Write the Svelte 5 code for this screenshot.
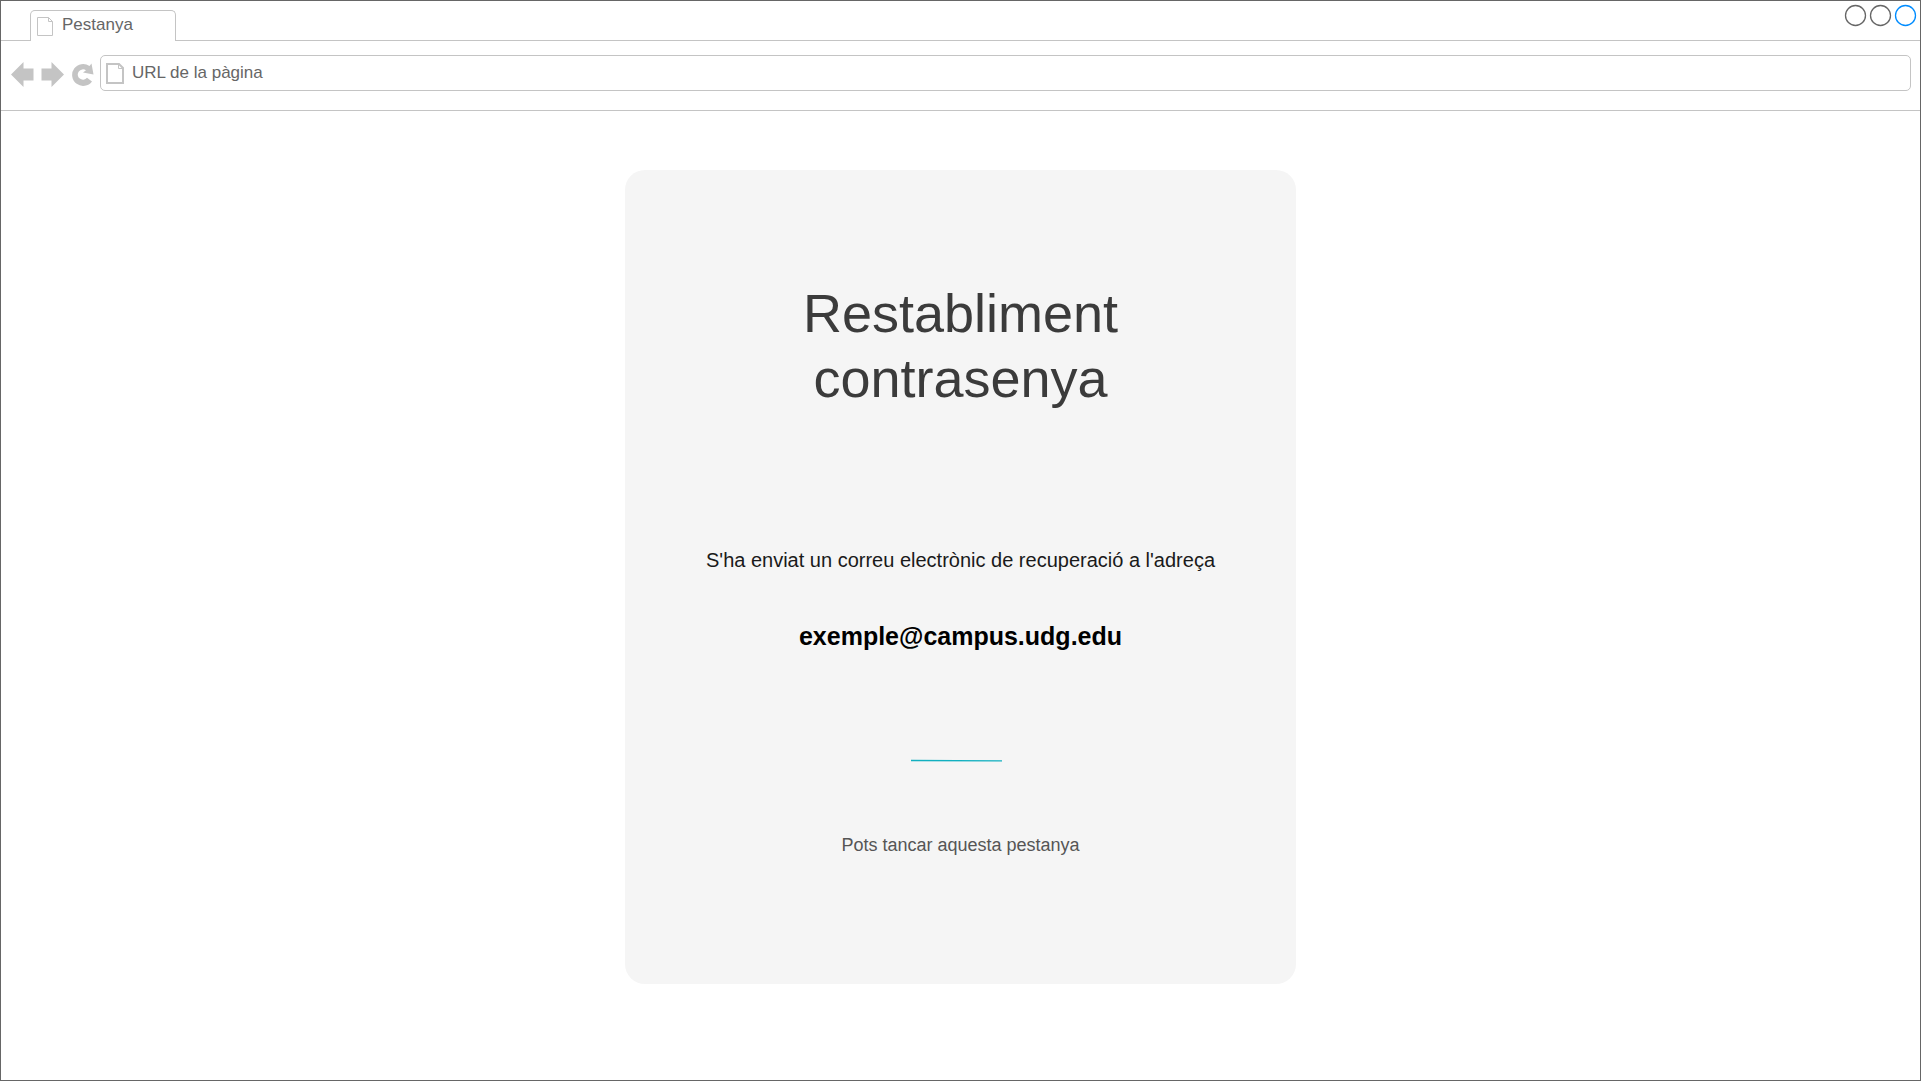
<script>
  let url = $state('URL de la pàgina');
  const email = 'exemple@campus.udg.edu';
</script>

<div class="window">
  <header>
    <div class="strip">
      <button class="tab" type="button">
        <svg width="16" height="19" viewBox="0 0 16 19" aria-hidden="true">
          <path d="M.5 .5H11.500L15.500 4.500V18.500H.5ZM11.500 .5V4.500H15.500" />
        </svg>
        <span>Pestanya</span>
      </button>
      <div class="controls">
        <button class="dot" type="button" aria-label="Minimitza">
          <svg width="21" height="21" viewBox="0 0 21 21"><circle cx="10.500" cy="10.500" r="10" /></svg>
        </button>
        <button class="dot" type="button" aria-label="Maximitza">
          <svg width="21" height="21" viewBox="0 0 21 21"><circle cx="10.500" cy="10.500" r="10" /></svg>
        </button>
        <button class="dot active" type="button" aria-label="Tanca">
          <svg width="21" height="21" viewBox="0 0 21 21"><circle cx="10.500" cy="10.500" r="10" /></svg>
        </button>
      </div>
    </div>
    <div class="toolbar">
      <nav>
        <button class="nav" type="button" aria-label="Enrere">
          <svg width="23" height="26" viewBox="0 0 23 26"><path d="M0 12.500L12.500 0V6.500H22.500V18.500H12.500V25Z" /></svg>
        </button>
        <button class="nav" type="button" aria-label="Endavant">
          <svg width="23" height="26" viewBox="0 0 23 26"><path d="M23 12.500L10.500 0V6.500H.5V18.500H10.500V25Z" /></svg>
        </button>
        <button class="nav" type="button" aria-label="Actualitza">
          <svg width="23" height="26" viewBox="0 0 23 26">
            <path d="M20.500 1.500L22.500 12.500L12 10.500L15 8.300A5.200 5.200 0 1 0 16 15.800L21 19.500A11 11 0 1 1 18.500 4Z" />
          </svg>
        </button>
      </nav>
      <label class="address">
        <svg width="18" height="21" viewBox="0 0 18 21" aria-hidden="true">
          <path d="M1 1H13L17 5V20H1Z" /><path class="fold" d="M12.500 1V5.500H17" />
        </svg>
        <input type="text" aria-label="URL" bind:value={url} />
      </label>
    </div>
  </header>

  <main>
    <section class="card">
      <h1>Restabliment<br />contrasenya</h1>
      <p class="message">S'ha enviat un correu electrònic de recuperació a l'adreça</p>
      <p class="email">{email}</p>
      <svg class="rule" width="91" height="3" viewBox="0 0 91 3" aria-hidden="true">
        <path d="M0 1.500L91 1.900" />
      </svg>
      <p class="hint">Pots tancar aquesta pestanya</p>
    </section>
  </main>
</div>

<style>
  :global(body) {
    margin: 0;
    background: #fff;
  }

  .window {
    box-sizing: border-box;
    min-height: calc(100vh - 1px);
    margin: 0 1px 1px 0;
    border: 1px solid #666;
    background: #fff;
    font-family: 'Liberation Sans', Arial, sans-serif;
  }

  button,
  input {
    margin: 0;
    padding: 0;
    border: 0;
    background: none;
    font: inherit;
    color: inherit;
  }

  .strip {
    display: flex;
    justify-content: space-between;
    align-items: flex-end;
    box-sizing: border-box;
    height: 40px;
    padding: 0 4px 0 29px;
    border-bottom: 1px solid #c4c4c4;
  }

  .tab {
    display: flex;
    align-items: center;
    gap: 9px;
    box-sizing: border-box;
    width: 146px;
    height: 31px;
    margin-bottom: -1px;
    padding: 0 6px;
    border: 1px solid #c4c4c4;
    border-bottom: 0;
    border-radius: 5px 5px 0 0;
    background: #fff;
    color: #666;
    font-size: 17px;
    line-height: 20px;
  }

  .tab span {
    padding-bottom: 2px;
  }

  .tab svg,
  .address svg {
    flex: none;
    fill: none;
    stroke: #c4c4c4;
  }

  .controls {
    display: flex;
    gap: 4px;
    align-self: flex-start;
    padding-top: 4px;
  }

  .dot {
    display: flex;
    color: #666;
  }

  .dot svg {
    overflow: visible;
    fill: none;
    stroke: currentColor;
    stroke-width: 1.3;
  }

  .dot.active {
    color: #008cff;
  }

  .toolbar {
    display: flex;
    align-items: center;
    gap: 5px;
    box-sizing: border-box;
    height: 70px;
    padding: 14px 9px 19px 10px;
    border-bottom: 1px solid #c4c4c4;
  }

  nav {
    display: flex;
    gap: 7px;
    padding: 3px 1px 0 0;
  }

  .nav {
    display: flex;
  }

  .nav svg {
    fill: #c4c4c4;
  }

  .address {
    display: flex;
    flex: 1;
    align-items: center;
    gap: 8px;
    box-sizing: border-box;
    height: 36px;
    padding: 0 5px;
    border: 1px solid #c4c4c4;
    border-radius: 5px;
    color: #666;
  }

  .address svg {
    stroke-width: 2;
  }

  .address .fold {
    stroke-width: 1;
  }

  .address input {
    flex: 1;
    min-width: 0;
    height: 20px;
    padding-bottom: 1px;
    outline: 0;
    font-size: 17px;
    line-height: 20px;
  }

  main {
    display: flex;
    justify-content: center;
    padding: 59px 16px;
  }

  .card {
    display: flex;
    flex-direction: column;
    align-items: center;
    box-sizing: border-box;
    width: 671px;
    max-width: 100%;
    padding: 111px 24px 128px;
    border-radius: 20px;
    background: #f5f5f5;
    text-align: center;
  }

  h1,
  p {
    margin: 0;
  }

  h1 {
    color: #3b3b3b;
    font-size: 54px;
    font-weight: 400;
    line-height: 65px;
  }

  .message {
    margin-top: 137px;
    color: #1a1a1a;
    font-size: 20px;
    line-height: 24px;
  }

  .email {
    margin-top: 49px;
    color: #000;
    font-size: 25px;
    font-weight: 700;
    line-height: 30px;
  }

  .rule {
    margin: 108px 9px 0 0;
    fill: none;
    stroke: #12b0c0;
    stroke-width: 1.3;
  }

  .hint {
    margin-top: 72px;
    color: #555;
    font-size: 18px;
    line-height: 22px;
  }
</style>
